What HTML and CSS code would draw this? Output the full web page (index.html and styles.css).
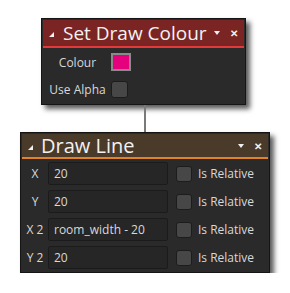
FILE: index.html
```html
<!DOCTYPE html>
<html lang="en">
<head>
    <meta charset="UTF-8">
    <title>Draw Actions</title>
    <link rel="stylesheet" href="styles.css">
</head>
<body>

<div class="canvas">
    <div class="panel panel-colour">
        <div class="header header-red">
            <span class="corner"></span>
            <span class="title">Set Draw Colour</span>
            <span class="drop"></span>
            <span class="close">&#x2715;</span>
        </div>
        <div class="body">
            <div class="row">
                <span class="label">Colour</span>
                <span class="swatch"></span>
            </div>
            <div class="row">
                <span class="label">Use Alpha</span>
                <span class="check"></span>
            </div>
        </div>
    </div>

    <div class="link"></div>

    <div class="panel panel-line">
        <div class="header header-brown">
            <span class="corner"></span>
            <span class="title">Draw Line</span>
            <span class="drop"></span>
            <span class="close">&#x2715;</span>
        </div>
        <div class="body">
            <div class="row">
                <span class="label">X</span>
                <span class="field">20</span>
                <span class="check"></span>
                <span class="rel">Is Relative</span>
            </div>
            <div class="row">
                <span class="label">Y</span>
                <span class="field">20</span>
                <span class="check"></span>
                <span class="rel">Is Relative</span>
            </div>
            <div class="row">
                <span class="label">X 2</span>
                <span class="field">room_width - 20</span>
                <span class="check"></span>
                <span class="rel">Is Relative</span>
            </div>
            <div class="row">
                <span class="label">Y 2</span>
                <span class="field">20</span>
                <span class="check"></span>
                <span class="rel">Is Relative</span>
            </div>
        </div>
    </div>
</div>

</body>
</html>
```

FILE: styles.css
```css
body {
    margin: 0;
    background-color: #fff;
    font-family: "Open Sans", "Noto Sans", sans-serif;
    color: #d8d8d8;
}
.canvas {
    display: flex;
    flex-direction: column;
    align-items: flex-start;
    padding-top: 18px;
}
.panel {
    background-color: #2a2a2a;
    border: 1px solid #151515;
    box-shadow: 4px 4px 5px rgba(0, 0, 0, 0.65);
}
.panel-colour {
    width: 203px;
    margin-left: 41px;
}
.panel-line {
    width: 248px;
    margin-left: 20px;
}
.link {
    width: 2px;
    height: 27px;
    margin-left: 144px;
    background-color: #7a7a7a;
}
.header {
    display: flex;
    align-items: center;
    margin: 1px 1px 0;
    padding: 0 6px 0 5px;
    white-space: nowrap;
}
.header-red {
    height: 26px;
    background-color: #7b2424;
    border-bottom: 2px solid #e23a3a;
    font-size: 19px;
}
.header-brown {
    height: 23px;
    background-color: #4a3a2a;
    border-bottom: 2px solid #e2832a;
    font-size: 20px;
}
.corner {
    flex-shrink: 0;
    width: 0;
    height: 0;
    border-left: 5px solid transparent;
    border-bottom: 5px solid #f0f0f0;
    margin: 3px 9px 0 1px;
}
.header-brown .corner {
    margin-right: 8px;
}
.title {
    flex: 1;
    color: #f2f2f2;
    line-height: 1;
    margin-top: 1px;
}
.drop {
    flex-shrink: 0;
    width: 0;
    height: 0;
    border-left: 3.5px solid transparent;
    border-right: 3.5px solid transparent;
    border-top: 4px solid #f0f0f0;
    margin-right: 10px;
}
.close {
    color: #f0f0f0;
    font-size: 10px;
    font-weight: bold;
}
.panel-colour .body {
    display: flex;
    flex-direction: column;
    gap: 9px;
    padding: 5px 0 6px 5px;
}
.panel-line .body {
    display: flex;
    flex-direction: column;
    gap: 5px;
    padding: 3px 0 3px 1px;
}
.row {
    display: flex;
    align-items: center;
    font-size: 12px;
}
.panel-colour .row {
    height: 18px;
}
.panel-colour .label {
    width: 61px;
    text-align: center;
    margin-right: 3px;
}
.panel-line .label {
    width: 26px;
    text-align: center;
}
.swatch {
    box-sizing: border-box;
    width: 20px;
    height: 18px;
    border: 2px solid #8a8a8a;
    background-color: #e5007d;
}
.check {
    box-sizing: border-box;
    width: 17px;
    height: 17px;
    background-color: #474747;
    border: 1px solid #1c1c1c;
    border-radius: 3px;
}
.field {
    box-sizing: border-box;
    width: 120px;
    height: 23px;
    line-height: 21px;
    padding-left: 5px;
    background-color: #262626;
    border: 1px solid #1b1b1b;
    border-radius: 2px;
    margin-right: 8px;
}
.panel-line .check {
    width: 16px;
    height: 16px;
}
.rel {
    margin-left: 6px;
}
```
